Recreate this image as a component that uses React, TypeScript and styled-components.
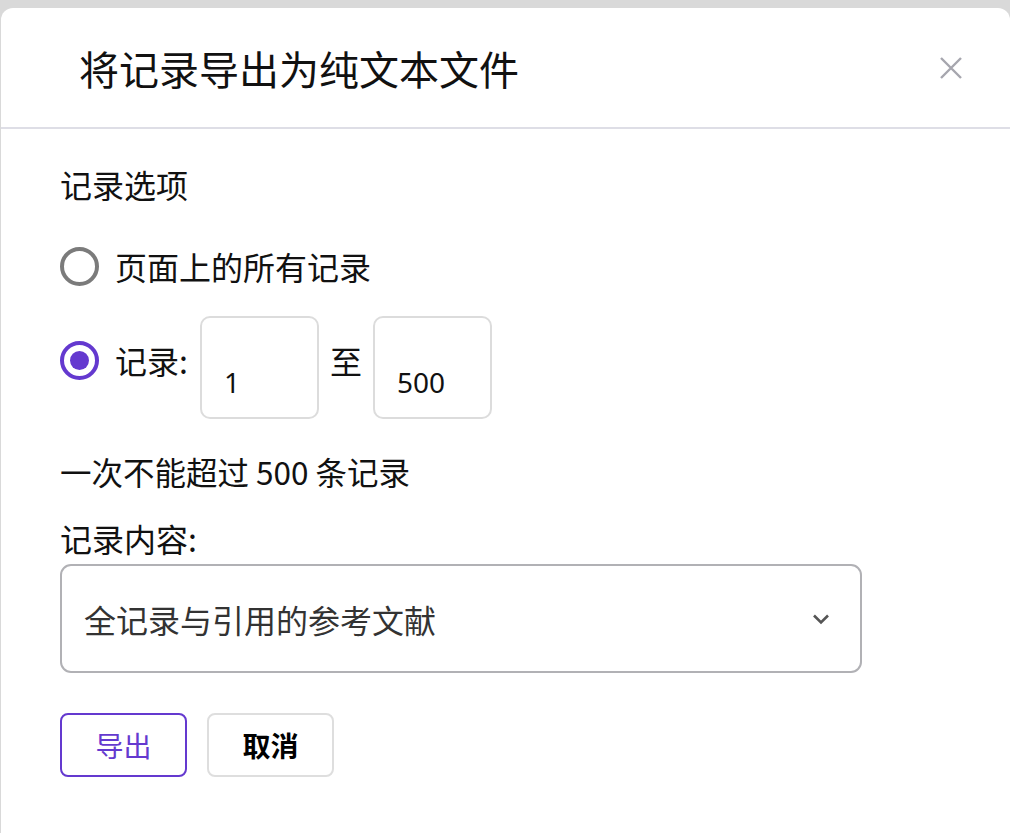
import styled, { createGlobalStyle } from "styled-components";

const GlobalStyle = createGlobalStyle`
  html, body {
    margin: 0;
    padding: 0;
    background: #d9d9d9;
    font-family: "Noto Sans CJK SC", "Noto Sans", sans-serif;
    color: #111;
  }
`;

const purple = "#6439cf";

const SDialog = styled.div`
  margin: 8px 0 0 1px;
  background: #fff;
  border-radius: 12px 12px 0 0;
  min-height: 825px;
`;

const SHeader = styled.div`
  height: 119px;
  display: flex;
  align-items: center;
  justify-content: space-between;
  padding: 0 48px 0 78px;
  border-bottom: 2px solid #dedee6;
`;

const STitle = styled.h1`
  margin: 0;
  font-size: 40px;
  font-weight: 400;
  line-height: 1.2;
  color: #111;
`;

const SClose = styled.button`
  border: 0;
  background: none;
  padding: 0;
  width: 22px;
  height: 22px;
  display: flex;
  align-items: center;
  justify-content: center;
  cursor: pointer;
`;

const SBody = styled.div`
  padding: 31px 59px 0;
`;

const SLabel = styled.div<{ $top?: number; $size?: number }>`
  font-size: ${p => p.$size ?? 32}px;
  line-height: 48px;
  margin-top: ${p => p.$top ?? 0}px;
`;

const SRadioRow = styled.label<{ $top: number }>`
  display: flex;
  align-items: flex-start;
  margin-top: ${p => p.$top}px;
  font-size: 32px;
  line-height: 48px;
`;

const SRadioLead = styled.span<{ $offset: number }>`
  display: flex;
  align-items: center;
  gap: 16px;
  margin-top: ${p => p.$offset}px;
  margin-right: 12px;
`;

const SRadio = styled.span<{ $checked?: boolean }>`
  box-sizing: border-box;
  width: 39px;
  height: 39px;
  border-radius: 50%;
  border: 4px solid ${p => (p.$checked ? purple : "#7b7b7b")};
  display: flex;
  align-items: center;
  justify-content: center;
  &::after {
    content: "";
    width: 19px;
    height: 19px;
    border-radius: 50%;
    background: ${p => (p.$checked ? purple : "transparent")};
  }
`;

const SNumInput = styled.input`
  box-sizing: border-box;
  width: 119px;
  height: 103px;
  border: 2px solid #dcdcdc;
  border-radius: 10px;
  padding: 44px 22px 15px;
  font-family: "Noto Sans", "Noto Sans CJK SC", sans-serif;
  font-size: 28px;
  line-height: 40px;
  color: #111;
  outline: none;
`;

const STo = styled.span`
  margin: 20px 11px 0;
`;

const SSelect = styled.div`
  box-sizing: border-box;
  margin-top: 2px;
  width: 802px;
  height: 109px;
  border: 2px solid #b1b1b5;
  border-radius: 11px;
  display: flex;
  align-items: center;
  justify-content: space-between;
  padding: 0 30px 0 22px;
  font-size: 32px;
  color: #333;
`;

const SButtons = styled.div`
  display: flex;
  gap: 20px;
  margin-top: 40px;
`;

const SButton = styled.button<{ $primary?: boolean }>`
  box-sizing: border-box;
  width: 127px;
  height: 64px;
  border-radius: 8px;
  background: #fff;
  border: 2px solid ${p => (p.$primary ? purple : "#dedede")};
  color: ${p => (p.$primary ? purple : "#000")};
  font-family: "Noto Sans CJK SC", sans-serif;
  font-size: 28px;
  font-weight: ${p => (p.$primary ? 400 : 700)};
  cursor: pointer;
`;

export default function App() {
  return (
    <>
      <GlobalStyle />
      <SDialog>
        <SHeader>
          <STitle>将记录导出为纯文本文件</STitle>
          <SClose aria-label="关闭">
            <svg width="22" height="22" viewBox="0 0 22 22">
              <path d="M1 1L21 21M21 1L1 21" stroke="#a6a6ae" strokeWidth="2.4" />
            </svg>
          </SClose>
        </SHeader>
        <SBody>
          <SLabel>记录选项</SLabel>
          <SRadioRow $top={34}>
            <SRadioLead $offset={0}>
              <SRadio />
              页面上的所有记录
            </SRadioLead>
          </SRadioRow>
          <SRadioRow $top={26}>
            <SRadioLead $offset={20}>
              <SRadio $checked />
              记录:
            </SRadioLead>
            <SNumInput defaultValue="1" />
            <STo>至</STo>
            <SNumInput defaultValue="500" />
          </SRadioRow>
          <SLabel $top={28} $size={31.5}>一次不能超过 500 条记录</SLabel>
          <SLabel $top={19}>记录内容:</SLabel>
          <SSelect>
            <span>全记录与引用的参考文献</span>
            <svg width="18" height="12" viewBox="0 0 18 12">
              <path d="M2 2.5L9 9.5L16 2.5" fill="none" stroke="#555" strokeWidth="2.6" />
            </svg>
          </SSelect>
          <SButtons>
            <SButton $primary>导出</SButton>
            <SButton>取消</SButton>
          </SButtons>
        </SBody>
      </SDialog>
    </>
  );
}
